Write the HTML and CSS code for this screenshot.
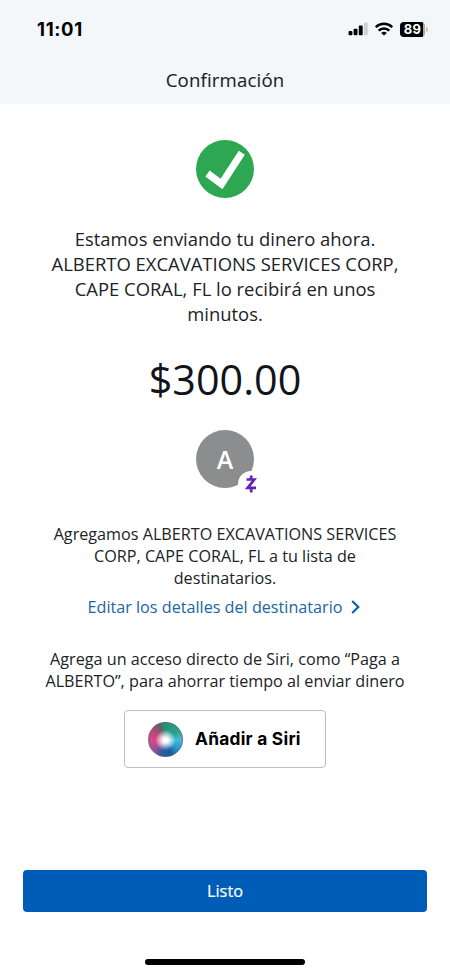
FILE: index.html
```html
<!DOCTYPE html>
<html lang="es">
<head>
<meta charset="utf-8">
<meta name="viewport" content="width=device-width, initial-scale=1">
<title>Confirmación</title>
<link rel="stylesheet" href="styles.css">
</head>
<body>
<div class="screen">
  <header class="header">
    <div class="status">
      <span class="time">11:01</span>
      <div class="indicators">
        <svg class="signal" width="20" height="14" viewBox="0 0 20 14">
          <rect x="0.500" y="9" width="3.900" height="4.300" rx="1"/>
          <rect x="5.600" y="6.800" width="3.900" height="6.500" rx="1"/>
          <rect x="10.800" y="3.500" width="3.900" height="9.800" rx="1"/>
          <rect x="16" y="0.500" width="3.700" height="12.800" rx="1" fill="#cdd0d2"/>
        </svg>
        <svg class="wifi" width="18" height="14" viewBox="0 0 18 14" fill="none" stroke="#000" stroke-width="2.500">
          <path d="M0.800 5.200A11.600 11.600 0 0 1 17.200 5.200"/>
          <path d="M3.700 8.600A7.500 7.500 0 0 1 14.300 8.600"/>
          <path d="M9 13.600L6.200 10.900A4.400 4.400 0 0 1 11.800 10.900Z" fill="#000" stroke="none"/>
        </svg>
        <div class="battery"><span class="charge">89</span><span class="nub"></span></div>
      </div>
    </div>
    <h1 class="title">Confirmación</h1>
  </header>
  <main class="content">
    <svg class="success" width="58" height="58" viewBox="0 0 58 58">
      <circle cx="29" cy="29" r="29" fill="#2da751"/>
      <path d="M11.500 33.500L25.500 44L45.800 12.800" fill="none" stroke="#fff" stroke-width="7.200"/>
    </svg>
    <p class="message">Estamos enviando tu dinero ahora.<br>ALBERTO EXCAVATIONS SERVICES CORP,<br>CAPE CORAL, FL lo recibirá en unos<br>minutos.</p>
    <div class="amount">$300.00</div>
    <div class="avatar">A
      <span class="badge"><svg width="12" height="18" viewBox="0 0 12 18" fill="none" stroke="#6222b5" stroke-width="2.700"><path d="M1.500 4.500H9.300L2.700 12.800H11"/><path d="M6.200 0.500V4.500M6.200 13V17.500"/></svg></span>
    </div>
    <p class="note added">Agregamos ALBERTO EXCAVATIONS SERVICES<br>CORP, CAPE CORAL, FL a tu lista de<br>destinatarios.</p>
    <a class="edit" href="#"><span>Editar los detalles del destinatario</span><svg width="9" height="14" viewBox="0 0 9 14" fill="none" stroke="#0b60b0" stroke-width="2.200"><path d="M1.200 1L7.300 7L1.200 13"/></svg></a>
    <p class="note hint">Agrega un acceso directo de Siri, como “Paga a<br>ALBERTO”, para ahorrar tiempo al enviar dinero</p>
    <button class="siri"><span class="orb"></span><span>Añadir a Siri</span></button>
  </main>
  <footer class="footer">
    <button class="done">Listo</button>
    <div class="home"></div>
  </footer>
</div>
</body>
</html>
```
FILE: styles.css
```css
* { box-sizing: border-box; }
body { margin: 0; background: #fff; }
p, h1 { margin: 0; }
button { font: inherit; padding: 0; }
svg { display: block; flex: none; }

.screen {
  width: 450px;
  height: 974px;
  display: flex;
  flex-direction: column;
  font-family: "Open Sans", sans-serif;
  color: #202326;
  white-space: nowrap;
  overflow: hidden;
}

.header { height: 104px; background: #f3f7f9; flex: none; }
.status {
  height: 58px;
  padding: 0 22px 0 37px;
  display: flex;
  align-items: center;
  justify-content: space-between;
}
.time { font: 700 18.500px/22px Inter, sans-serif; letter-spacing: 0.65px; color: #000; }
.indicators { display: flex; align-items: center; }
.wifi { margin-left: 7px; }
.battery { display: flex; align-items: center; margin-left: 7px; }
.charge {
  width: 25px;
  height: 15px;
  border-radius: 4px;
  background: linear-gradient(90deg, #000 92%, #a8acae 92%);
  color: #fff;
  font: 700 13px/15px Inter, sans-serif;
  letter-spacing: 0.3px;
  text-align: center;
}
.nub { width: 2px; height: 5px; margin-left: 1px; border-radius: 0 2px 2px 0; background: #c4c8ca; }
.title {
  margin-top: 9px;
  font-size: 18.600px;
  line-height: 26px;
  font-weight: 500;
  letter-spacing: 0.17px;
  text-align: center;
  -webkit-text-stroke: 0.1px #202326;
}

.content { display: flex; flex-direction: column; align-items: center; text-align: center; }
.success { margin-top: 36px; }
.message { margin-top: 28px; font-size: 18.430px; line-height: 25px; }
.amount { margin-top: 25px; font-size: 41.300px; line-height: 56px; color: #111519; }
.avatar {
  position: relative;
  width: 58px;
  height: 58px;
  margin-top: 23px;
  border-radius: 50%;
  background: #8b8d8e;
  color: #fff;
  font-size: 25px;
  line-height: 59px;
  font-weight: 600;
}
.badge {
  position: absolute;
  left: 42px;
  top: 41px;
  width: 26px;
  height: 26px;
  border-radius: 50%;
  background: #fff;
  display: flex;
  align-items: center;
  justify-content: center;
}
.note { font-size: 16.180px; line-height: 22px; }
.added { margin-top: 35px; }
.edit {
  margin-top: 6px;
  display: flex;
  align-items: center;
  gap: 9px;
  padding-right: 2px;
  font-size: 16.180px;
  line-height: 24px;
  color: #2066a0;
  text-decoration: none;
}
.hint { margin-top: 29px; }
.siri {
  width: 202px;
  height: 58px;
  margin-top: 18px;
  border: 1px solid #bfbfc1;
  border-radius: 4px;
  background: #fff;
  color: #000;
  display: flex;
  align-items: center;
  padding-left: 23px;
  gap: 12px;
  font: 700 17.300px/22px Inter, sans-serif;
  letter-spacing: 0.26px;
}
.orb {
  width: 35px;
  height: 35px;
  border-radius: 50%;
  border: 1px solid #62677599;
  background:
    radial-gradient(circle at 50% 52%, #fff 0 8%, #ffffffb3 20%, #fff0 43%),
    conic-gradient(from 0deg at 50% 52%, #259477, #29a08d 15%, #46bad7 24%, #299dd0 34%, #155c9e 44%, #315c9a 54%, #a24f93 65%, #df4388 75%, #ba4776 85%, #5e6265 94%, #259477);
}

.footer { margin-top: auto; height: 104px; padding: 0 23px; flex: none; }
.done {
  display: block;
  width: 100%;
  height: 42px;
  border: 0;
  border-radius: 4px;
  background: #005db7;
  color: #fff;
  font-size: 16.300px;
  font-weight: 500;
  -webkit-text-stroke: 0.2px #fff;
}
.home { width: 160px; height: 6px; margin: 47px auto 0; border-radius: 3px; background: #000; }
```
